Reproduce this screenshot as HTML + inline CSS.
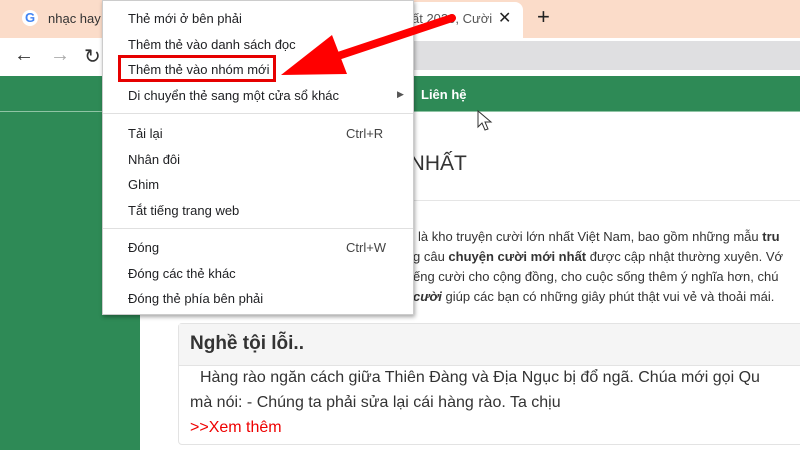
<!DOCTYPE html>
<html><head><meta charset="utf-8"><style>
*{margin:0;padding:0;box-sizing:border-box}
body{width:800px;height:450px;overflow:hidden;position:relative;background:#fff;font-family:"Liberation Sans",sans-serif}
.a{position:absolute;white-space:nowrap}
.mi{position:absolute;left:128px;font-size:13px;color:#202124}
.sc{position:absolute;left:346px;font-size:13px;color:#444}
p.t{position:absolute;font-size:13px;color:#333;white-space:nowrap}
</style></head><body>
<div class="a" style="left:0;top:0;width:800px;height:38px;background:#fbdcc9"></div>
<div class="a" style="left:408px;top:2px;width:115px;height:36px;background:#fff;border-radius:8px 8px 0 0"></div>
<div class="a" style="left:22px;top:10px;width:16px;height:16px;border-radius:50%;background:#fff;font-weight:bold;font-size:13px;color:#4285f4;text-align:center;line-height:16px">G</div>
<div class="a" style="left:48px;top:11px;font-size:13px;color:#333">nhạc hay</div>
<div class="a" style="left:412px;top:11px;font-size:13px;color:#555">ất 2020, Cười</div>
<div class="a" style="left:498px;top:8px;font-size:16px;color:#222">✕</div>
<div class="a" style="left:537px;top:4px;font-size:22px;color:#222">+</div>
<div class="a" style="left:0;top:38px;width:800px;height:38px;background:#fff"></div>
<div class="a" style="left:14px;top:44px;font-size:20px;color:#333">←</div>
<div class="a" style="left:50px;top:44px;font-size:20px;color:#aaa">→</div>
<div class="a" style="left:84px;top:44px;font-size:20px;color:#333">↻</div>
<div class="a" style="left:400px;top:41px;width:400px;height:29px;background:#dfdfe1"></div>
<div class="a" style="left:0;top:76px;width:800px;height:36px;background:#2e8a56;border-bottom:1px solid #8fc4a4"></div>
<div class="a" style="left:421px;top:87px;font-size:13px;font-weight:bold;color:#fff">Liên hệ</div>
<div class="a" style="left:0;top:112px;width:140px;height:338px;background:#2e8a56"></div>
<div class="a" style="left:380px;top:152px;font-size:21px;color:#333">ỚI NHẤT</div>
<div class="a" style="left:160px;top:200px;width:640px;height:1px;background:#e5e5e5"></div>
<p class="t" style="left:418px;top:229px">là kho truyện cười lớn nhất Việt Nam, bao gồm những mẫu <b>tru</b></p>
<p class="t" style="left:413px;top:249px">g câu <b>chuyện cười mới nhất</b> được cập nhật thường xuyên. Vớ</p>
<p class="t" style="left:413px;top:269px">ếng cười cho cộng đồng, cho cuộc sống thêm ý nghĩa hơn, chú</p>
<p class="t" style="left:413px;top:289px"><b><i>cười</i></b> giúp các bạn có những giây phút thật vui vẻ và thoải mái.</p>
<div class="a" style="left:178px;top:323px;width:630px;height:122px;border:1px solid #e3e3e3;border-radius:4px;background:#fff"></div>
<div class="a" style="left:179px;top:324px;width:630px;height:42px;background:#f5f5f5;border-bottom:1px solid #e3e3e3"></div>
<div class="a" style="left:190px;top:333px;font-size:19px;font-weight:bold;color:#333">Nghề tội lỗi..</div>
<div class="a" style="left:200px;top:369px;font-size:16px;color:#333">Hàng rào ngăn cách giữa Thiên Đàng và Địa Ngục bị đổ ngã. Chúa mới gọi Qu</div>
<div class="a" style="left:190px;top:394px;font-size:16px;color:#333">mà nói: - Chúng ta phải sửa lại cái hàng rào. Ta chịu</div>
<div class="a" style="left:190px;top:419px;font-size:16px;color:#e00">&gt;&gt;Xem thêm</div>
<div class="a" style="left:102px;top:0;width:312px;height:315px;background:#fff;box-shadow:1px 2px 4px rgba(0,0,0,.35);border:1px solid #ccc"></div>
<div class="mi" style="top:11px">Thẻ mới ở bên phải</div>
<div class="mi" style="top:37px">Thêm thẻ vào danh sách đọc</div>
<div class="mi" style="top:62px">Thêm thẻ vào nhóm mới</div>
<div class="mi" style="top:88px">Di chuyển thẻ sang một cửa sổ khác</div>
<div class="a" style="left:397px;top:89px;font-size:9px;color:#555">▶</div>
<div class="a" style="left:103px;top:113px;width:310px;height:1px;background:#e0e0e0"></div>
<div class="mi" style="top:126px">Tải lại</div><div class="sc" style="top:126px">Ctrl+R</div>
<div class="mi" style="top:152px">Nhân đôi</div>
<div class="mi" style="top:177px">Ghim</div>
<div class="mi" style="top:203px">Tắt tiếng trang web</div>
<div class="a" style="left:103px;top:228px;width:310px;height:1px;background:#e0e0e0"></div>
<div class="mi" style="top:240px">Đóng</div><div class="sc" style="top:240px">Ctrl+W</div>
<div class="mi" style="top:266px">Đóng các thẻ khác</div>
<div class="mi" style="top:291px">Đóng thẻ phía bên phải</div>
<div class="a" style="left:118px;top:55px;width:158px;height:27px;border:3px solid #e60000"></div>
<svg class="a" style="left:0;top:0" width="800" height="450">
<line x1="452" y1="18" x2="320" y2="62" stroke="#f00" stroke-width="8" stroke-linecap="round"/>
<polygon points="281,75 332,35 347,74" fill="#f00"/>
<path d="M478 111 L478 127 L482 123 L485 130 L488 129 L485 122 L491 122 Z" fill="#fff" stroke="#333" stroke-width="1"/>
</svg>
</body></html>
